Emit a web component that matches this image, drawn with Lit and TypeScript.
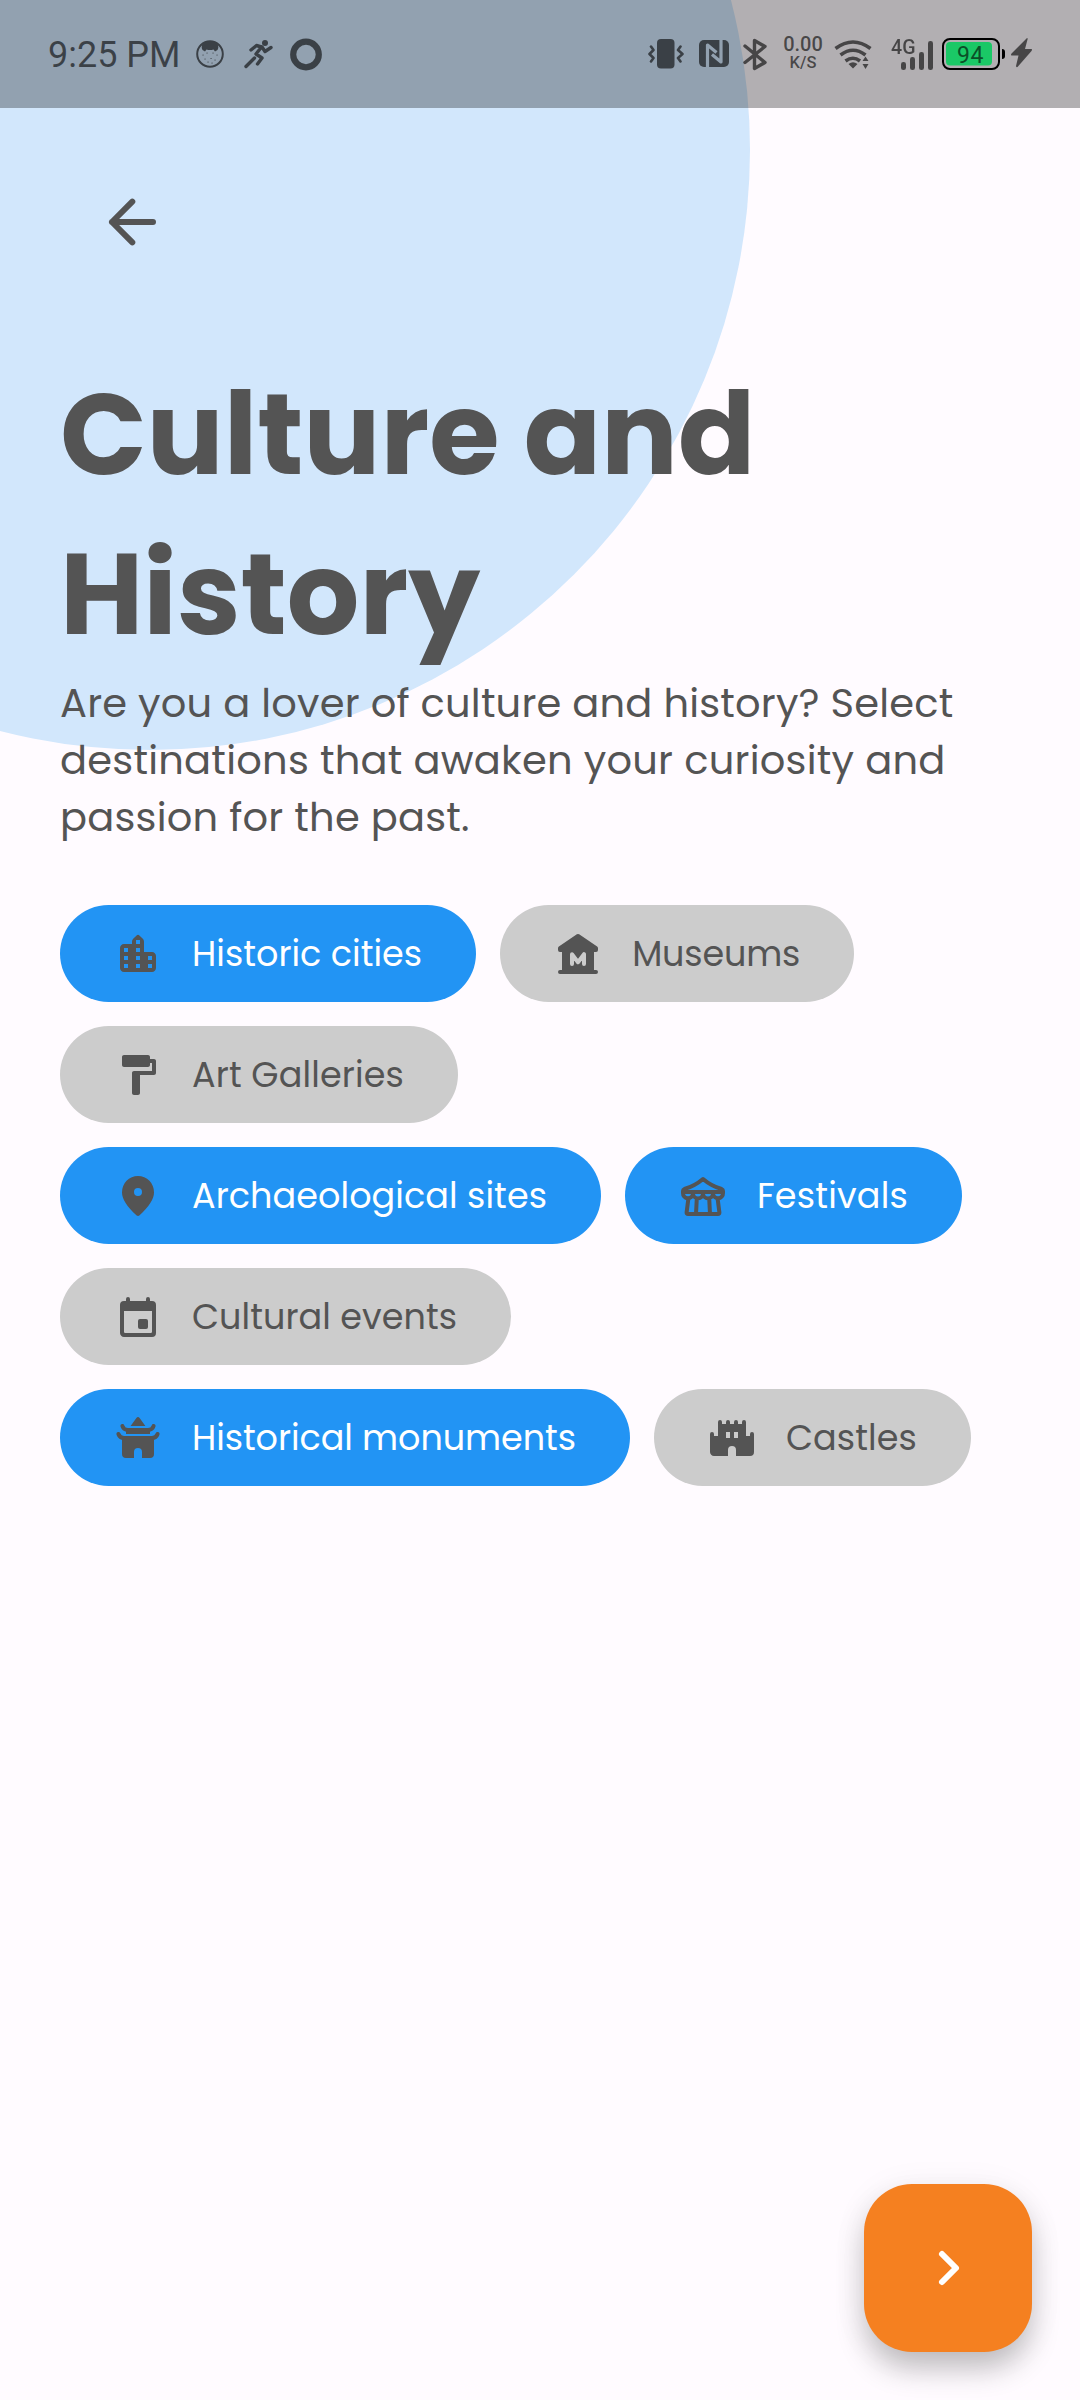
import { LitElement, html, css, svg } from "lit";
import { customElement, property, state } from "lit/decorators.js";
import { classMap } from "lit/directives/class-map.js";
import { styleMap } from "lit/directives/style-map.js";

const icons: Record<string, unknown> = {
  city: svg`<path d="M15 11V5.83c0-.53-.21-1.04-.59-1.41L12.7 2.71a1 1 0 0 0-1.41 0l-1.7 1.7C9.21 4.79 9 5.3 9 5.83V7H5c-1.1 0-2 .9-2 2v10c0 1.1.9 2 2 2h14c1.1 0 2-.9 2-2v-6c0-1.1-.9-2-2-2h-4zm-8 8H5v-2h2v2zm0-4H5v-2h2v2zm0-4H5V9h2v2zm6 8h-2v-2h2v2zm0-4h-2v-2h2v2zm0-4h-2V9h2v2zm0-4h-2V5h2v2zm6 12h-2v-2h2v2zm0-4h-2v-2h2v2z"/>`,
  museum: svg`<path d="M22 9.1V10a1 1 0 0 1-1 1h-1v9h1a1 1 0 0 1 0 2H3a1 1 0 0 1 0-2h1v-9H3a1 1 0 0 1-1-1V9.1a1 1 0 0 1 .43-.82l9-6.1a1 1 0 0 1 1.14 0l9 6.1a1 1 0 0 1 .43.82z"/><path class="cut" d="M9 17v-4.9l3 4 3-4V17"/>`,
  roller: svg`<path d="M18 4V3c0-.55-.45-1-1-1H5c-.55 0-1 .45-1 1v4c0 .55.45 1 1 1h12c.55 0 1-.45 1-1V6h1v4H10c-.55 0-1 .45-1 1v10c0 .55.45 1 1 1h2c.55 0 1-.45 1-1v-9h7c.55 0 1-.45 1-1V5c0-.55-.45-1-1-1h-2z"/>`,
  pin: svg`<path fill-rule="evenodd" d="M12 2a8 8 0 0 0-8 8.2c0 3.2 2.4 7 7.34 11.53.38.33.95.33 1.33 0C17.6 17.2 20 13.4 20 10.2A8 8 0 0 0 12 2zm0 10a2 2 0 1 1 0-4 2 2 0 0 1 0 4z"/>`,
  tent: svg`<path class="line" d="M12 3.5C9.2 5.9 6.2 7.5 2.7 8.5Q2 8.8 2 9.5v1a2.5 2.5 0 0 0 5 .2 2.5 2.5 0 0 0 5 0 2.5 2.5 0 0 0 5 0 2.5 2.5 0 0 0 5-.2v-1q0-.7-.7-1C17.8 7.5 14.8 5.9 12 3.5zM2.4 10h19.2M4.7 13.3 3.8 20.3q0 .7.7.7h15q.7 0 .7-.7l-.9-7M8.9 13.2 8.5 21M15.1 13.2l.4 7.8"/>`,
  calendar: svg`<path fill-rule="evenodd" d="M19 4h-1V3a1 1 0 0 0-2 0v1H8V3a1 1 0 0 0-2 0v1H5a2 2 0 0 0-2 2v14c0 1.1.9 2 2 2h14a2 2 0 0 0 2-2V6a2 2 0 0 0-2-2zm0 15.2c0 .5-.3.8-.8.8H5.8c-.5 0-.8-.3-.8-.8V9h14v10.2z"/><rect x="12" y="13" width="5" height="5" rx="1"/>`,
  temple: svg`<path d="m8.3 6 2.9-4q.8-.9 1.6 0l2.9 4zM6 8h12v2H6zM4 11.5h16V20a2 2 0 0 1-2 2h-4v-3a2 2 0 0 0-4 0v3H6a2 2 0 0 1-2-2z"/><path class="line" d="M4.2 6Q4.8 8 7 8h10q2.2 0 2.8-2M2.2 10Q2.9 12 5 12h14q2.1 0 2.8-2"/>`,
  castle: svg`<path fill-rule="evenodd" d="M22 9a1 1 0 0 0-1 1v1h-2V4a1 1 0 0 0-2 0v1h-2V4a1 1 0 0 0-2 0v1h-2V4a1 1 0 0 0-2 0v1H7V4a1 1 0 0 0-2 0v7H3v-1a1 1 0 0 0-2 0v9c0 1.1.9 2 2 2h7v-3a2 2 0 0 1 4 0v3h7a2 2 0 0 0 2-2v-9a1 1 0 0 0-1-1zm-11 3H9V9h2v3zm4 0h-2V9h2v3z"/>`,
};

@customElement("interest-chip")
class InterestChip extends LitElement {
  static styles = css`
    :host { display: block; }
    .chip {
      --fill: #ccc;
      box-sizing: border-box; height: 97px; border: 0; border-radius: 48.5px;
      padding: 0 54px; display: flex; align-items: center; gap: 30px;
      background: var(--fill); color: #545454;
      font: 400 35px/50px Poppins, "Open Sans", sans-serif; white-space: nowrap;
    }
    .chip.selected { --fill: #2294f4; color: #fff; }
    .icon { width: 48px; height: 48px; margin-top: 1px; fill: #545454; }
    .line { fill: none; stroke: #545454; stroke-width: 2; stroke-linecap: round; stroke-linejoin: round; }
    .cut { fill: none; stroke: var(--fill); stroke-width: 2; stroke-linecap: round; stroke-linejoin: round; }
  `;
  @property() label = "";
  @property() icon = "";
  @property({ type: Number }) tracking = 0;
  @property({ type: Boolean }) selected = false;
  render() {
    return html`<button class=${classMap({ chip: true, selected: this.selected })}>
      <svg class="icon" viewBox="0 0 24 24">${icons[this.icon]}</svg>
      <span style=${styleMap({ letterSpacing: `${this.tracking}px` })}>${this.label}</span>
    </button>`;
  }
}

@customElement("status-bar")
class StatusBar extends LitElement {
  static styles = css`
    :host { display: block; }
    .bar { height: 108px; display: flex; align-items: stretch; background: rgba(0,0,0,.3); font-family: Roboto, sans-serif; color: rgba(0,0,0,.6); }
    .time { width: 142px; padding-left: 48px; font-size: 36px; line-height: 111px; white-space: nowrap; }
    svg { display: block; height: 108px; flex: none; }
    .ink { opacity: .6; }
    .s { fill: none; stroke: #000; stroke-linecap: round; stroke-linejoin: round; }
    .right { margin-left: auto; display: flex; }
    .speed { width: 52px; padding-top: 34px; text-align: center; font-weight: 500; }
    .rate { font-size: 20px; line-height: 20px; }
    .unit { font-size: 16.5px; line-height: 17px; }
    .net { font: 500 21px Roboto, sans-serif; }
    .level { font: 400 23px Roboto, sans-serif; fill: #0b5028; }
  `;
  render() {
    return html`<div class="bar">
      <div class="time">9:25 PM</div>
      <svg width="140" viewBox="190 0 140 108"><g class="ink">
        <circle class="s" cx="210" cy="54" r="12.8" stroke-width="2"/>
        <path d="M202.500 50Q200 45 205 42 210 40 215 42 220 45 217.500 50L215 51.500 213.500 49.500Q210 50.500 206.500 49.500L205 51.500Z"/>
        <path class="s" stroke-width="1.2" d="M203 55h.1M207 53h.1M213 53h.1M217 55h.1M205 59h.1M211 58.500h.1M215 60h.1M208 62h.1M212 63h.1"/>
        <circle cx="265" cy="43" r="3"/>
        <path class="s" stroke-width="3.4" d="m251 50 5.500-4.500 5 1.500-5.500 7 6 4-4.500 6M262 47l3 4.500 6-4M246 66.500l8.500-8.500"/>
        <circle class="s" cx="306" cy="54.500" r="12.800" stroke-width="6.200"/>
      </g></svg>
      <div class="right">
        <svg width="136" viewBox="641 0 136 108">
          <defs><mask id="nfc" maskUnits="userSpaceOnUse" x="695" y="36" width="40" height="36">
            <rect x="695" y="36" width="40" height="36" fill="#fff"/>
            <path d="M707.500 69V45l9 7.500M721 38v24l-9-7.500" fill="none" stroke="#000" stroke-width="3.200" stroke-linejoin="round"/>
          </mask></defs>
          <g class="ink">
          <rect x="657" y="39" width="17.500" height="29.500" rx="4"/>
          <path class="s" stroke-width="2.600" d="m651 46.500 2.500 3.500-4 4 4 4-2.500 3.500M680.500 46.500 678 50l4.500 4-4.500 4 2.500 3.500"/>
          <rect x="699" y="40" width="30" height="27" rx="5" mask="url(#nfc)"/>
          <path class="s" stroke-width="3.400" d="m745 46 20 16.500-10.500 6v-28l10.500 6L745 62.500"/>
        </g></svg>
        <div class="speed"><div class="rate">0.00</div><div class="unit">K/S</div></div>
        <svg width="251" viewBox="829 0 251 108">
          <g class="ink">
            <path class="s" style="stroke-linecap:butt" stroke-width="3.600" d="M835.500 48.500q17.500-13 35 0M840.500 55q12.500-9.500 25 0M845.500 61q7.500-5.500 14.500 0"/>
            <path d="m848.500 64q4.500-3.500 9 0L853 68.500zM862.500 61l3-4.500 3 4.500zM862.500 64l3 5 3-5z"/>
            <text class="net" x="891" y="53.500" textLength="24.500" lengthAdjust="spacingAndGlyphs">4G</text>
            <rect x="901" y="62" width="5" height="8" rx="2.300"/><rect x="910" y="57" width="5" height="13" rx="2.300"/><rect x="919" y="52" width="5" height="18" rx="2.300"/><rect x="928" y="41" width="5" height="29" rx="2.300"/>
            <path d="M1027 38q1 0 .5 1.500L1025 49h6.500q1 .5 0 2L1017.500 67q-1.500.500-1.500-1l2.500-10.500H1011.500q-1-.5 0-2z"/>
          </g>
          <rect x="943" y="39" width="56" height="30" rx="7" fill="none" stroke="#000" stroke-width="2"/>
          <rect x="946" y="42" width="46" height="23.500" rx="4" fill="#1ac866"/>
          <path d="M1002 49q3 0 3 3v4q0 3-3 3z"/>
          <text class="level" x="957" y="62.500" textLength="26.500">94</text>
        </svg>
      </div>
    </div>`;
  }
}

interface Interest { label: string; icon: string; tracking: number; selected: boolean; }

@customElement("app-root")
class AppRoot extends LitElement {
  static styles = css`
    :host { display: block; }
    .screen {
      position: relative; isolation: isolate; overflow: hidden; box-sizing: border-box;
      width: 1080px; height: 2400px; background: #fffbff; color: #545454;
      font-family: Poppins, "Open Sans", sans-serif; display: flex; flex-direction: column;
    }
    .orb { position: absolute; z-index: -1; left: -450px; top: -450px; width: 1200px; height: 1200px; border-radius: 50%; background: #d2e7fc; }
    .nav { height: 246px; padding: 78px 96px 0; box-sizing: border-box; }
    .back { display: block; width: 72px; height: 72px; padding: 0; border: 0; background: none; }
    .back svg { display: block; }
    .stroke { fill: none; stroke: #545454; stroke-width: 6; stroke-linecap: round; stroke-linejoin: round; }
    .stroke.light { stroke: #fff; }
    .content { padding: 0 60px; }
    h1 { margin: 0; font-size: 114px; font-weight: 700; line-height: 160px; white-space: nowrap; }
    p { margin: 0; padding-top: 1px; font-size: 40px; line-height: 57px; white-space: nowrap; }
    .row { display: block; }
    .chips { margin-top: 59px; display: flex; flex-wrap: wrap; gap: 24px; }
    .next {
      margin: auto 48px 48px auto; width: 168px; height: 168px; padding: 0; border: 0; border-radius: 48px;
      display: grid; place-items: center; background: #f58020;
      box-shadow: 0 18px 30px -2px rgba(0,0,0,.24), 0 4px 36px 0 rgba(0,0,0,.06);
    }
  `;
  private lines: [string, number][] = [
    ["Are you a lover of culture and history? Select", 0.18],
    ["destinations that awaken your curiosity and", 0.23],
    ["passion for the past.", 0.2],
  ];
  @state() private interests: Interest[] = [
    { label: "Historic cities", icon: "city", tracking: 0.03, selected: true },
    { label: "Museums", icon: "museum", tracking: -0.18, selected: false },
    { label: "Art Galleries", icon: "roller", tracking: 0.14, selected: false },
    { label: "Archaeological sites", icon: "pin", tracking: 0.06, selected: true },
    { label: "Festivals", icon: "tent", tracking: 0.21, selected: true },
    { label: "Cultural events", icon: "calendar", tracking: 0.05, selected: false },
    { label: "Historical monuments", icon: "temple", tracking: -0.06, selected: true },
    { label: "Castles", icon: "castle", tracking: 0.1, selected: false },
  ];
  render() {
    return html`<div class="screen">
      <div class="orb"></div>
      <status-bar></status-bar>
      <div class="nav"><button class="back" aria-label="Back">
        <svg width="72" height="72" viewBox="96 186 72 72"><path class="stroke" d="M153 222h-41M132.300 201.700 112 222l20.300 20.300"/></svg>
      </button></div>
      <div class="content">
        <h1>Culture and<br />History</h1>
        <p>${this.lines.map(([t, s]) => html`<span class="row" style=${styleMap({ letterSpacing: `${s}px` })}>${t}</span>`)}</p>
        <div class="chips">${this.interests.map(
          (i) => html`<interest-chip .label=${i.label} .icon=${i.icon} .tracking=${i.tracking} .selected=${i.selected}></interest-chip>`
        )}</div>
      </div>
      <button class="next" aria-label="Next">
        <svg width="72" height="72" viewBox="0 0 72 72"><path class="stroke light" d="m30 22 14 14-14 14"/></svg>
      </button>
    </div>`;
  }
}
